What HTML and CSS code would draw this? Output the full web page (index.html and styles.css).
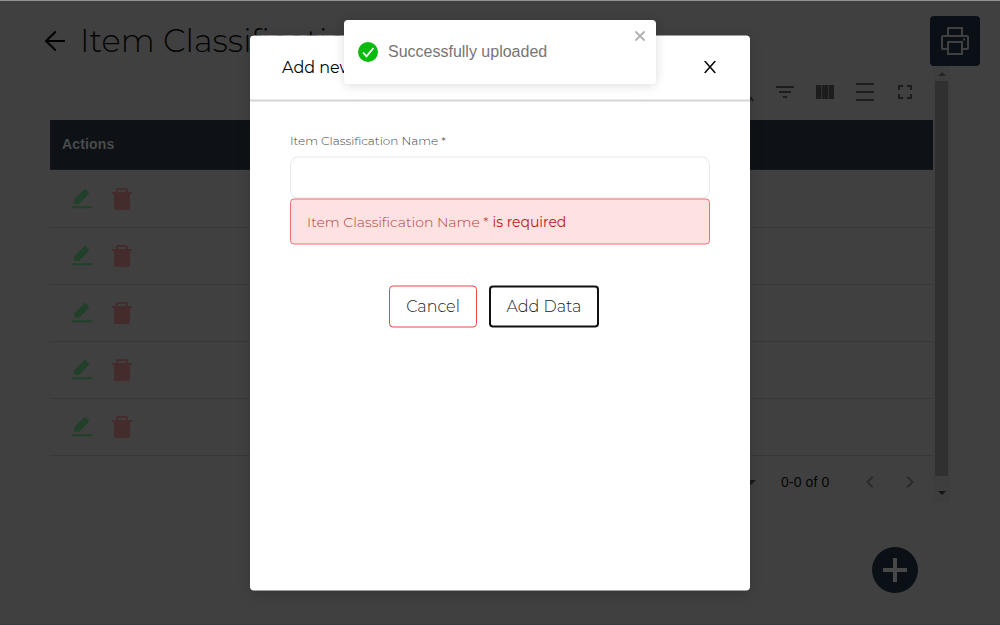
FILE: index.html
```
<!DOCTYPE html>
<html lang="en">
<head>
<meta charset="utf-8">
<title>Item Classification</title>
<link rel="stylesheet" href="styles.css">
</head>
<body>
<svg class="defs" width="0" height="0">
  <symbol id="edit" viewBox="0 0 24 24"><path d="M4.200 16.800V13.600L14.300 3.200q.7-.7 1.400 0l3.200 3.200q.6.7 0 1.300L9.800 17.300q-.5.500-1.200.5H5q-.8 0-.8-1zM2.600 20.200h18.700q1 0 1 1t-1 1H2.600q-1 0-1-1t1-1z"/></symbol>
  <symbol id="trash" viewBox="0 0 24 24"><path d="M6 6V4q0-2 2-2h8q2 0 2 2v2h4v2h-2v14q0 2-2 2H6q-2 0-2-2V8H2V6zM8 6h8V4H8z"/></symbol>
</svg>
<main class="page">
  <header class="top">
    <svg class="back" width="22" height="22" viewBox="0 0 22 22"><path d="M21 11H2M11.800 1.500L2 11l9.800 9.500"/></svg>
    <h1 class="title">Item Classification</h1>
    <button class="print" aria-label="Print"><svg width="34" height="34" viewBox="0 0 34 34"><path d="M10 12V4h14v8M10 25H5q-1 0-1-1V13q0-1 1-1h24q1 0 1 1v11q0 1-1 1h-5M10 18h14v12H10z"/><rect x="25" y="14.500" width="2" height="2"/></svg></button>
  </header>
  <div class="content">
    <section class="grid">
      <div class="tools">
        <svg width="24" height="24" viewBox="0 0 24 24"><path d="M15 14l6 6-1.500 1.500-6-6zM9.500 3a6.500 6.500 0 1 0 .1 0M9.500 5a4.500 4.500 0 1 1-.1 0" fill-rule="evenodd"/></svg>
        <svg width="24" height="24" viewBox="0 0 24 24"><path d="M3 6h18v2H3zM6 11h12v2H6zM10 16h4v2h-4z"/></svg>
        <svg width="24" height="24" viewBox="0 0 24 24"><path d="M3 5h18v14H3z"/><path class="gap" d="M8.500 5v14M15.500 5v14"/></svg>
        <svg width="24" height="24" viewBox="0 0 24 24"><path d="M3 3h18v2H3zM3 11h18v2H3zM3 19h18v2H3z"/></svg>
        <svg width="24" height="24" viewBox="0 0 24 24"><path d="M5 5h5v2H7v3H5zM14 5h5v5h-2V7h-3zM5 14h2v3h3v2H5zM17 14h2v5h-5v-2h3z"/></svg>
      </div>
      <div class="thead">Actions</div>
      <div class="row"><svg class="edit"><use href="#edit"/></svg><svg class="trash"><use href="#trash"/></svg></div>
      <div class="row"><svg class="edit"><use href="#edit"/></svg><svg class="trash"><use href="#trash"/></svg></div>
      <div class="row"><svg class="edit"><use href="#edit"/></svg><svg class="trash"><use href="#trash"/></svg></div>
      <div class="row"><svg class="edit"><use href="#edit"/></svg><svg class="trash"><use href="#trash"/></svg></div>
      <div class="row"><svg class="edit"><use href="#edit"/></svg><svg class="trash"><use href="#trash"/></svg></div>
      <div class="pager">
        <svg class="caret" width="10" height="5" viewBox="0 0 10 5"><path d="M0 0h10L5 5z"/></svg>
        <span class="range">0-0 of 0</span>
        <svg class="chev" width="24" height="24" viewBox="0 0 24 24"><path d="M15.400 7.400L14 6l-6 6 6 6 1.400-1.400L10.800 12z"/></svg>
        <svg class="chev" width="24" height="24" viewBox="0 0 24 24"><path d="M10 6L8.600 7.400l4.600 4.600-4.600 4.600L10 18l6-6z"/></svg>
      </div>
    </section>
    <div class="scroll">
      <svg width="8" height="4" viewBox="0 0 8 4"><path d="M4 0l4 4H0z" fill="#242424"/></svg>
      <div class="thumb"></div>
      <svg width="8" height="4" viewBox="0 0 8 4"><path d="M0 0h8L4 4z" fill="#151515"/></svg>
    </div>
  </div>
</main>
<button class="fab" aria-label="Add"><svg width="24" height="24" viewBox="0 0 24 24"><path d="M12 0v24M0 12h24"/></svg></button>

<div class="modal">
  <div class="modal-head">
    <h2 class="modal-title">Add new</h2>
    <svg class="modal-x" width="12" height="13" viewBox="0 0 12 13"><path d="M.7.500l10.600 12M11.300.500L.7 12.500"/></svg>
  </div>
  <form class="form">
    <label class="label" for="name"><span>Item Classification Name *</span></label>
    <input class="input" id="name">
    <div class="error"><span class="error-name">Item Classification Name *</span><span class="error-text">is required</span></div>
    <div class="buttons">
      <button type="button" class="btn cancel">Cancel</button>
      <button type="button" class="btn add">Add Data</button>
    </div>
  </form>
</div>

<div class="toast">
  <svg class="ok" width="20" height="20" viewBox="0 0 20 20"><circle cx="10" cy="10" r="10"/><path d="M5 10.500l3.500 3.800L15.500 6"/></svg>
  <span class="toast-text">Successfully uploaded</span>
  <svg class="toast-x" width="10" height="10" viewBox="0 0 10 10"><path d="M.5.500l9 9M9.500.500l-9 9"/></svg>
</div>
</body>
</html>
```
FILE: styles.css
```
* { box-sizing: border-box; }
body { margin: 0; height: 625px; overflow: hidden; background: #404040; font-family: Montserrat, Inter, sans-serif; }
button { padding: 0; font-family: inherit; }
svg { display: block; flex: none; }
.defs { position: absolute; }
.page { height: 625px; border-top: 1px solid #929493; border-bottom: 1px solid #383a3b; }
.top { display: flex; height: 69px; padding: 15px 20px 0 44px; }
.back { margin-top: 14px; fill: none; stroke: #000; stroke-width: 2; }
.title { margin: 5px 0 0 14px; font-size: 32px; line-height: 40px; font-weight: 300; color: #050505; white-space: nowrap; }
.print { display: flex; align-items: center; justify-content: center; width: 50px; height: 50px; margin-left: auto; border: 0; border-radius: 4px; background: #0b1016; }
.print svg { fill: none; stroke: #404040; stroke-width: 2; }
.print rect { fill: #404040; stroke: none; }
.content { display: flex; margin: -4px 0 0 50px; }
.grid { width: 883px; padding-top: 4px; }
.tools { display: flex; justify-content: flex-end; gap: 16px; height: 50px; padding: 10px 16px 0 0; fill: #1d1d1d; }
.gap { stroke: #303030; }
.thead { height: 50px; padding-left: 12px; background: #0e1216; color: #494b4c; font: bold 14px/48px "Liberation Sans", sans-serif; letter-spacing: .15px; border-bottom: 1px solid #15191c; }
.row { display: flex; height: 57px; padding: 15px 0 0 20px; gap: 16px; border-bottom: 1px solid #383838; }
.edit, .trash { width: 24px; height: 24px; }
.edit { fill: #204029; }
.trash { fill: #442c2c; }
.thead + .row { height: 58px; padding-top: 16px; }
.pager { display: flex; align-items: center; height: 52px; padding-right: 11px; color: #060606; font: 14px "Liberation Sans", sans-serif; }
.caret { margin-left: auto; fill: #181818; }
.range { margin: 0 28px 0 25px; width: 49px; letter-spacing: .1px; white-space: nowrap; }
.chev + .chev { margin-left: 16px; }
.chev { fill: #2b2b2b; }
.scroll { display: flex; flex-direction: column; align-items: center; width: 17px; height: 436px; padding: 6px 0 7px; background: #3e3e3e; }
.thumb { width: 13px; height: 395px; margin: 5px 0 15px; background: #303030; }
.fab { position: absolute; left: 872px; top: 547px; width: 46px; height: 46px; display: flex; align-items: center; justify-content: center; border: 0; border-radius: 50%; background: #0b1016; }
.fab path { stroke: #484848; stroke-width: 4; }
.modal { position: absolute; left: 250px; top: 36px; width: 500px; height: 555px; transform: translateY(-.5px); border-radius: 4px; background: #fff; box-shadow: 0 4px 14px rgba(0,0,0,.16); }
.modal-head { display: flex; align-items: center; justify-content: space-between; height: 65.500px; padding: 0 34px 0 32px; border-bottom: 2px solid #d4d5d5; }
.modal-title { margin: 0; font-size: 16px; font-weight: 400; line-height: 20px; color: #050505; }
.modal-x { fill: none; stroke: #050505; stroke-width: 1.500; }
.form { padding: 30.500px 40px 0; }
.label { display: block; height: 25px; font-size: 12px; line-height: 17px; font-weight: 300; color: #444; }
.input { display: block; width: 420px; height: 42px; border: 1px solid #e5e7eb; border-radius: 8px; background: #fff; }
.error { display: flex; align-items: center; gap: 4px; width: 420px; height: 46px; padding: 0 0 1px 16px; border: 1px solid #f56e6e; border-radius: 4px; background: #fee1e1; font-size: 14px; white-space: nowrap; }
.error-name { font-weight: 300; color: #b04040; }
.error-text { letter-spacing: -.05px; color: #b91c1c; }
.buttons { display: flex; gap: 12px; padding: 41px 0 0 99px; }
.btn { height: 42px; padding-bottom: 1px; border-radius: 4px; background: #fff; color: #222; font-size: 16px; font-weight: 300; white-space: nowrap; }
.cancel { width: 88px; border: 1px solid #ef4444; }
.add { width: 110px; border: 2px solid #111; }
.toast { position: absolute; left: 344px; top: 20px; width: 312px; height: 64px; display: flex; align-items: center; padding: 0 16px 0 14px; border-radius: 4px; background: #fff; box-shadow: 0 1px 10px rgba(0,0,0,.1), 0 2px 15px rgba(0,0,0,.05); }
.ok circle { fill: #07bc0c; }
.ok path { fill: none; stroke: #fff; stroke-width: 1.800; }
.toast-text { margin-left: 10px; color: #757575; font: 16px/20px "Liberation Sans", sans-serif; white-space: nowrap; }
.toast-x { align-self: flex-start; margin: 11px -5px 0 auto; stroke: #b2b2b2; stroke-width: 2; }
```
